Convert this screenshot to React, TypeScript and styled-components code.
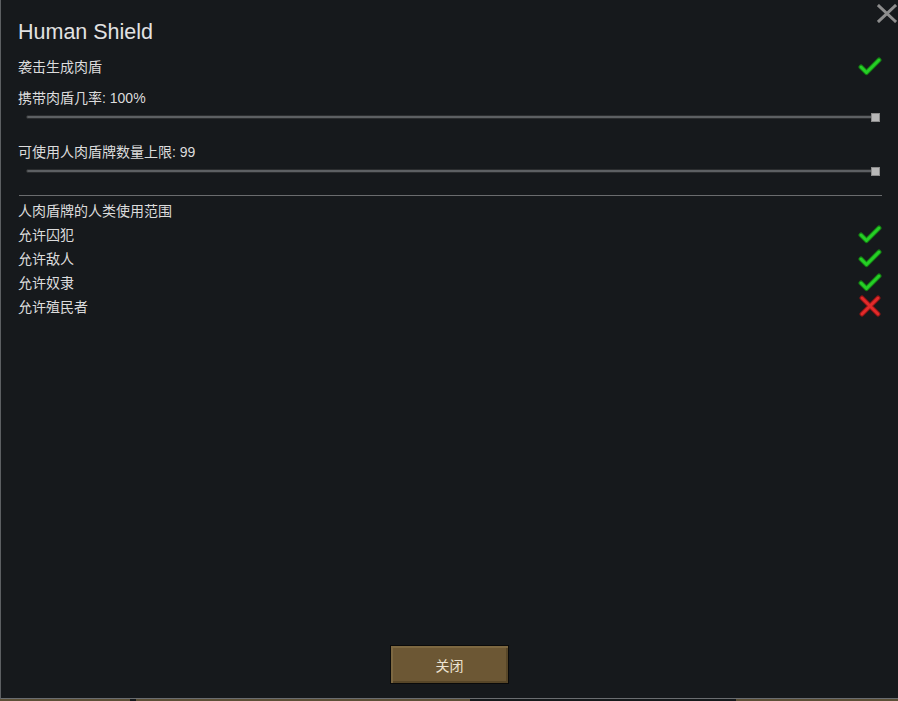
import * as React from "react";
import styled, { createGlobalStyle } from "styled-components";

const GlobalStyle = createGlobalStyle`
	html, body {
		margin: 0;
		padding: 0;
		background: #121416;
	}
	body {
		font-family: "Liberation Sans", "Noto Sans CJK SC", sans-serif;
	}
`;

const Screen = styled.div`
	width: 898px;
	height: 701px;
	overflow: hidden;
	display: flex;
	flex-direction: column;
	background: #121416;
`;

const Dialog = styled.div`
	position: relative;
	flex: 1;
	display: flex;
	flex-direction: column;
	background: #16191c;
	border-left: 1px solid #5c5f62;
	border-bottom: 1px solid #6a6d70;
	padding: 18px 16px 0 17px;
`;

const CloseX = styled.button`
	position: absolute;
	top: 2px;
	right: 0;
	width: 22px;
	height: 22px;
	padding: 0;
	border: 0;
	background: none;
	display: flex;
	align-items: center;
	justify-content: center;
`;

const Title = styled.div`
	height: 28px;
	line-height: 28px;
	font-size: 21.5px;
	color: #e2e2e2;
	margin-bottom: 8px;
`;

const Row = styled.div<{ $gap?: number }>`
	height: 24px;
	display: flex;
	align-items: center;
	justify-content: space-between;
	margin-top: ${({ $gap = 0 }) => $gap}px;
	font-size: 14px;
	color: #dcdcdc;
`;

const SliderTrack = styled.div`
	position: relative;
	height: 16px;
	margin: 0 2px 0 8px;
	display: flex;
	align-items: center;
`;

const TrackLine = styled.div`
	flex: 1;
	height: 2px;
	background: #5d6063;
	border: 1px solid #2b2d2f;
	border-radius: 2px;
`;

const Handle = styled.div`
	position: absolute;
	right: 0;
	top: 4px;
	width: 7px;
	height: 7px;
	background: #b8b8b8;
	border: 1px solid #8a8a8a;
`;

const Separator = styled.div`
	height: 1px;
	background: #6a6c6e;
	margin: 16px 0 2px 1px;
`;

const Footer = styled.div`
	margin-top: auto;
	margin-bottom: 14px;
	display: flex;
	justify-content: center;
	padding-right: 1px;
`;

const CloseButton = styled.button`
	width: 119px;
	height: 39px;
	border: 1px solid #0a0a0a;
	background: #6c5734;
	box-shadow: inset 2px 2px 0 #7d6841, inset -2px -2px 0 #574628;
	color: #ece4d2;
	font-family: "Liberation Sans", "Noto Sans CJK SC", sans-serif;
	font-size: 14px;
	padding: 0;
`;

const BottomStrip = styled.div`
	height: 2px;
	display: flex;
`;

const StripSegment = styled.div<{ $w: number; $dark?: boolean }>`
	width: ${({ $w }) => $w}px;
	background: ${({ $dark }) => ($dark ? "#15191b" : "#5c5037")};
`;

const Check = () => (
	<svg width="24" height="20" viewBox="0 0 24 20">
		<path d="M3 11 L8.5 16.5 L21 4" fill="none" stroke="#147a14" strokeWidth="5" strokeLinecap="round" strokeLinejoin="round" />
		<path d="M3 11 L8.5 16.5 L21 4" fill="none" stroke="#25cf25" strokeWidth="3" strokeLinecap="round" strokeLinejoin="round" />
	</svg>
);

const Cross = () => (
	<svg width="24" height="22" viewBox="0 0 24 22">
		<path d="M4 3 L20 19 M20 3 L4 19" fill="none" stroke="#8a1414" strokeWidth="5" strokeLinecap="round" />
		<path d="M4 3 L20 19 M20 3 L4 19" fill="none" stroke="#e12a2a" strokeWidth="3" strokeLinecap="round" />
	</svg>
);

const Slider = () => (
	<SliderTrack>
		<TrackLine />
		<Handle />
	</SliderTrack>
);

const options: { label: string; allowed: boolean }[] = [
	{ label: "允许囚犯", allowed: true },
	{ label: "允许敌人", allowed: true },
	{ label: "允许奴隶", allowed: true },
	{ label: "允许殖民者", allowed: false },
];

const App = () => (
	<Screen>
		<GlobalStyle />
		<Dialog>
			<CloseX aria-label="close">
				<svg width="20" height="19" viewBox="0 0 20 19">
					<path d="M2 2 L18 17 M18 2 L2 17" stroke="#8d8d8d" strokeWidth="3" strokeLinecap="square" />
				</svg>
			</CloseX>
			<Title>Human Shield</Title>
			<Row>
				<span>袭击生成肉盾</span>
				<Check />
			</Row>
			<Row $gap={7}>携带肉盾几率: 100%</Row>
			<Slider />
			<Row $gap={14}>可使用人肉盾牌数量上限: 99</Row>
			<Slider />
			<Separator />
			<Row>人肉盾牌的人类使用范围</Row>
			{options.map((o) => (
				<Row key={o.label}>
					<span>{o.label}</span>
					{o.allowed ? <Check /> : <Cross />}
				</Row>
			))}
			<Footer>
				<CloseButton>关闭</CloseButton>
			</Footer>
		</Dialog>
		<BottomStrip>
			<StripSegment $w={130} />
			<StripSegment $w={6} $dark />
			<StripSegment $w={334} />
			<StripSegment $w={266} $dark />
			<StripSegment $w={162} />
		</BottomStrip>
	</Screen>
);

export default App;
